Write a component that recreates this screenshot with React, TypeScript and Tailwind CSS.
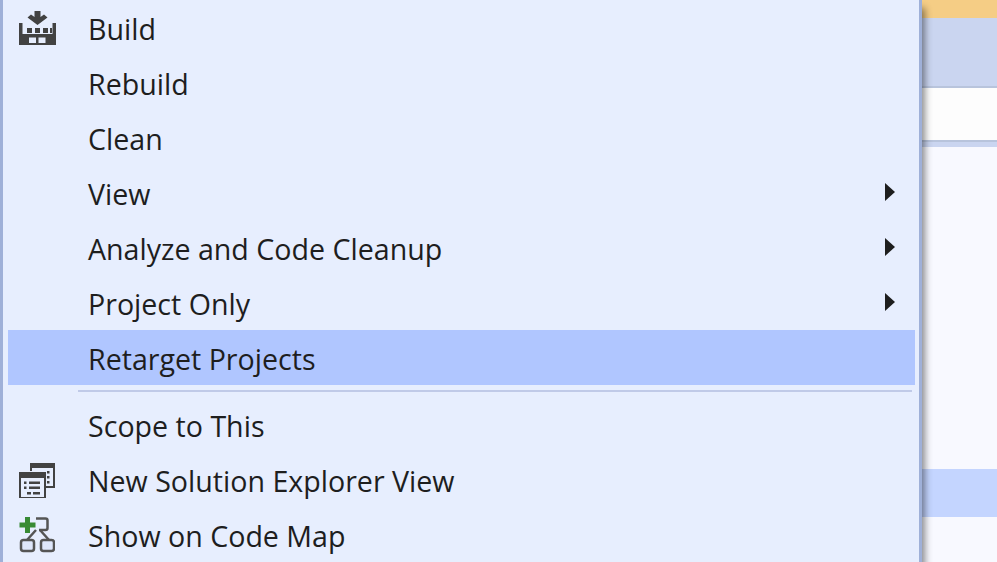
import { ReactNode } from "react";

const BuildIcon = () => (
  <svg width="37" height="36" viewBox="0 0 37 36" fill="none" className="shrink-0">
    <path d="M15.500 1h6v6l3.500-2.500 3.500 3L18.500 15 8.500 7.500l3.500-3 3.500 2.500z" fill="#424242" />
    <path d="M0 13h3.500v11h30V13H37v22H0z" fill="#424242" />
    <path d="M8 18h5v5H8zM16 18h5v5h-5zM24 18h5v5h-5zM31 18h2v5h-2z" fill="#424242" />
    <path d="M10 27.500h7v5.500h-7zM19.500 27.500h7v5.500h-7z" fill="#e7eefe" />
  </svg>
);

const NewViewIcon = () => (
  <svg width="36" height="36" viewBox="0 0 36 36" fill="none" className="shrink-0">
    <path d="M11 1h25v25h-9v-2h7V6H13v3h-2z" fill="#424242" />
    <path d="M28 9h2.500v2.500H28zM28 14h2.500v2.500H28zM28 19h2.500v2.500H28z" fill="#424242" />
    <rect x="1" y="11" width="25" height="25" fill="#e7eefe" stroke="#424242" strokeWidth="2" />
    <rect x="1" y="11" width="25" height="5" fill="#424242" />
    <path d="M5 19.500h2.500V22H5zM10 19.500h11V22H10zM5 24.500h2.500V27H5zM10 24.500h11V27H10zM8 30h4v2.500H8zM14 30h7v2.500h-7z" fill="#424242" />
  </svg>
);

const CodeMapIcon = () => (
  <svg width="36" height="36" viewBox="0 0 36 36" fill="none" className="shrink-0">
    <path d="M17 1.500h9.500a2 2 0 0 1 2 2v7.500a2 2 0 0 1-2 2H20" stroke="#555555" strokeWidth="2.500" />
    <path d="M17 13 8 23M21 13l9 10" stroke="#555555" strokeWidth="2.500" />
    <rect x="2" y="23" width="13" height="11" rx="2.500" fill="#dfe7fb" stroke="#555555" strokeWidth="2.500" />
    <rect x="22" y="23" width="13" height="11" rx="2.500" fill="#dfe7fb" stroke="#555555" strokeWidth="2.500" />
    <path d="M6 0h5v5.500h5.500v5H11V16H6v-5.500H.5v-5H6z" fill="#388a34" />
  </svg>
);

const MenuRow = ({
  label,
  icon,
  submenu,
  active,
}: {
  label: string;
  icon?: ReactNode;
  submenu?: boolean;
  active?: boolean;
}) => (
  <div
    className={`h-[55px] shrink-0 flex items-center ${active ? "bg-[#b0c6ff]" : ""}`}
  >
    <div className="w-[80px] pl-[11px] flex items-center shrink-0">{icon}</div>
    <span className="flex-1 text-[28.6px] leading-[55px] text-[#1e1e1e] pt-[1px]">{label}</span>
    {submenu && (
      <svg width="10" height="18" viewBox="0 0 10 18" className="mr-[20px] mb-[2px]">
        <path d="M0 0l10 9-10 9z" fill="#1e1e1e" />
      </svg>
    )}
  </div>
);

export default function App() {
  return (
    <div
      className="w-[997px] h-[562px] overflow-hidden flex bg-[#f8f9ff]"
      style={{ fontFamily: '"Open Sans", "Noto Sans", sans-serif' }}
    >
      <div className="relative z-10 w-[922px] h-[575px] shrink-0 flex flex-col bg-[#e7eefe] border-l-[3px] border-r-[3px] border-[#9fb0d8] pl-[5px] pr-[4px] shadow-[3px_8px_7px_rgba(0,0,0,0.45)]">
        <MenuRow label="Build" icon={<BuildIcon />} />
        <MenuRow label="Rebuild" />
        <MenuRow label="Clean" />
        <MenuRow label="View" submenu />
        <MenuRow label="Analyze and Code Cleanup" submenu />
        <MenuRow label="Project Only" submenu />
        <MenuRow label="Retarget Projects" active />
        <div className="h-[2px] ml-[70px] mr-[3px] mt-[5px] mb-[5px] bg-[#c0cae8] shrink-0" />
        <MenuRow label="Scope to This" />
        <MenuRow label="New Solution Explorer View" icon={<NewViewIcon />} />
        <MenuRow label="Show on Code Map" icon={<CodeMapIcon />} />
      </div>
      <div className="flex-1 flex flex-col">
        <div className="h-[18px] bg-[#f5cd85]" />
        <div className="h-[68px] bg-[#cad5f0]" />
        <div className="h-[2px] bg-[#b8c4dc]" />
        <div className="h-[52px] bg-[#fdfdfd]" />
        <div className="h-[2px] bg-[#b8c4dc]" />
        <div className="h-[5px] bg-[#cad5f0]" />
        <div className="h-[48px] mt-[322px] bg-[#c4d5ff]" />
      </div>
    </div>
  );
}
